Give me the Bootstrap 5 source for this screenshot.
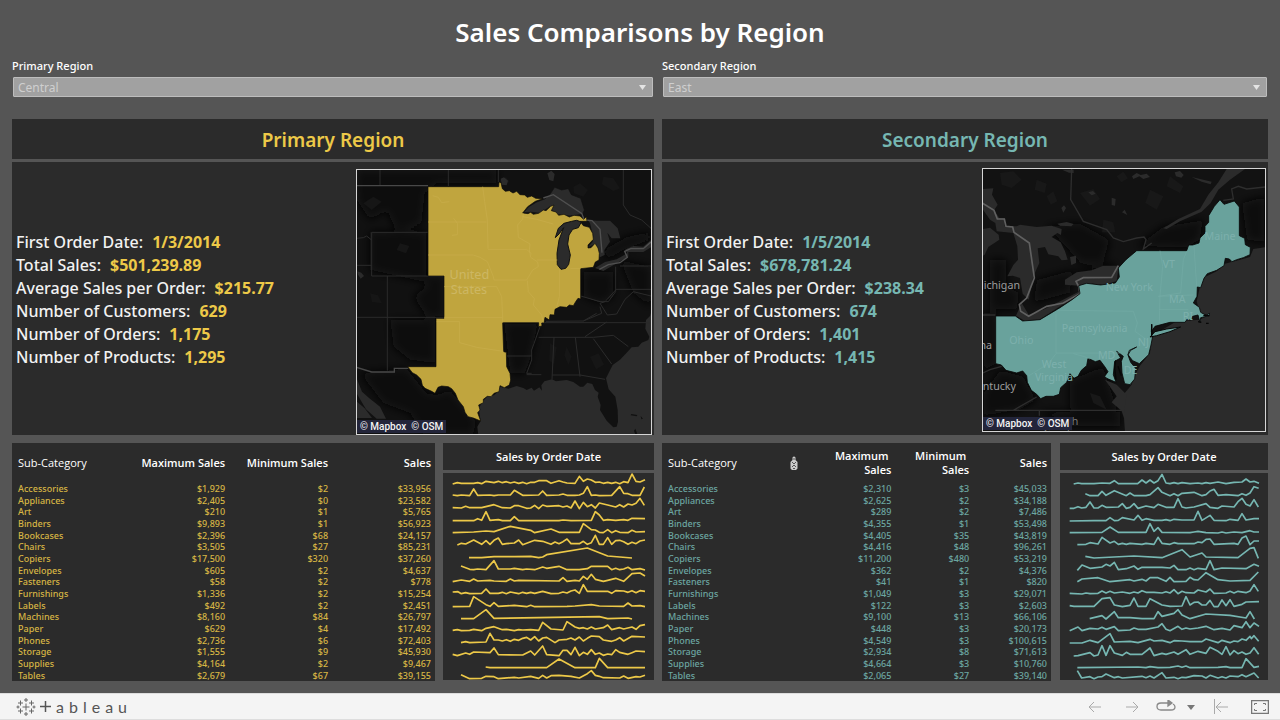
<!DOCTYPE html>
<html lang="en">
<head>
<meta charset="utf-8">
<meta name="viewport" content="width=device-width, initial-scale=1">
<title>Sales Comparisons by Region</title>
<link href="https://cdn.jsdelivr.net/npm/bootstrap@5.3.0/dist/css/bootstrap.min.css" rel="stylesheet">
<style>
:root{--panel:#2b2b2b;--yellow:#edc948;--teal:#76b7b2}
body{background:#555;color:#fff;font-family:"Noto Sans","Open Sans",sans-serif;font-size:12px;line-height:16px}
.dash{padding:12px;flex:1}
.dash h1{font-size:26px;line-height:40px;font-weight:600;margin:0 0 6px;text-align:center}
.regions{display:grid;grid-template-columns:642fr 606fr;column-gap:8px}
.primary{--tone:var(--yellow);--dim:#d6b544}
.secondary{--tone:var(--teal);--dim:#6ba6a1}
.panel{background:var(--panel)}
.filter label{font-size:11px;font-weight:500;margin-bottom:3px;display:block}
.filter .form-select{background-color:#a1a1a1;border:1px solid #bdbdbd;border-radius:1px;color:#cfcfcf;font-size:12px;line-height:16px;height:20px;padding:1px 20px 0 4px;margin:0 1px 22px;width:calc(100% - 2px);background-size:7px 5px;background-position:right 6px center;background-image:url("data:image/svg+xml,%3Csvg xmlns='http://www.w3.org/2000/svg' viewBox='0 0 7 5'%3E%3Cpath d='M0 0h7L3.500 5z' fill='%23e4e4e4'/%3E%3C/svg%3E")}
.region-name{font-size:19px;line-height:42px;height:40px;margin:0 0 3px;font-weight:600;text-align:center;color:var(--tone)}
.overview{min-height:273px;margin-bottom:8px;padding:6px 2px 0 4px}
.facts{font-size:16px;line-height:23px;margin:0 0 4px;font-weight:500;color:#f2f2f2}
.facts dt{font-weight:500}.facts dd{margin:0 0 0 9px;font-weight:700;color:var(--tone)}
.mapbox{position:relative;align-self:flex-start;border:1px solid #d6d6d6}
.primary .mapbox{flex:0 0 296px;margin-top:1px}
.secondary .mapbox{flex:0 0 284px}
.mapbox svg{display:block;width:100%}
.credit{position:absolute;left:0;bottom:1px;background:#23253a;padding:0 3px;font:500 10px/13px Roboto,sans-serif;gap:5px}
.credit a{color:#f4f4f4;text-decoration:none}
.details{display:grid;align-items:start}
.primary .details{grid-template-columns:423fr 211fr;column-gap:8px}
.secondary .details{grid-template-columns:389fr 208fr;column-gap:9px}
.figures{width:100%;table-layout:fixed;margin:0;font-size:9px;line-height:11px;color:var(--dim)}
.figures th,.figures td{padding:0 4px 0 0;text-align:right;font-weight:500;vertical-align:middle}
.figures th:first-child{text-align:left;padding-left:6px;overflow:hidden}
.figures thead th{height:39px;font:600 11px/14px "Open Sans","Noto Sans",sans-serif;color:#fff}
.figures thead th:first-child{font-weight:400}
.figures tbody tr{height:12px}
.figures tbody tr:nth-child(3n){height:11px}
.primary .figures col:first-child{width:27%}
.secondary .figures col:first-child{width:40%}
.trend-title{font:600 11px/28px "Open Sans","Noto Sans",sans-serif;height:27px;margin:0 0 3px;text-align:center}
.trend svg{display:block;width:100%}
.trend polyline{fill:none;stroke:var(--tone);stroke-width:5;stroke-linejoin:round}
.pointer{margin-right:16px;width:8px;height:14px}
.toolbar{background:#f4f4f4;border-top:1px solid #ddd;border-bottom:1px solid #ddd;height:27px;padding:0 11px 0 16px}
.toolbar button{border:0;background:none;padding:0;display:flex}
.step-s{margin-right:6px}.step-m{margin-right:14px}.step-l{margin-right:22px}
.wordmark{font:16px/20px Lato,sans-serif;color:#555;gap:5px}
</style>
</head>
<body class="d-flex flex-column min-vh-100">
<main class="dash">
<h1>Sales Comparisons by Region</h1>
<div class="regions">

<section class="primary">
<div class="filter"><label for="r1">Primary Region</label><select id="r1" class="form-select"><option>Central</option><option>East</option><option>South</option><option>West</option></select></div>
<h2 class="panel region-name">Primary Region</h2>
<div class="panel overview d-flex justify-content-between">
<dl class="facts align-self-center">
<div class="d-flex"><dt>First Order Date:</dt><dd>1/3/2014</dd></div>
<div class="d-flex"><dt>Total Sales:</dt><dd>$501,239.89</dd></div>
<div class="d-flex"><dt>Average Sales per Order:</dt><dd>$215.77</dd></div>
<div class="d-flex"><dt>Number of Customers:</dt><dd>629</dd></div>
<div class="d-flex"><dt>Number of Orders:</dt><dd>1,175</dd></div>
<div class="d-flex"><dt>Number of Products:</dt><dd>1,295</dd></div>
</dl>
<div class="mapbox">
<svg viewBox="21 30 882 792" role="img" aria-label="Map of the Central region">
<defs><filter id="soft" x="-20%" y="-20%" width="140%" height="140%"><feGaussianBlur stdDeviation="12"/></filter></defs>
<rect x="20" y="28" width="888" height="800" fill="#111"/>
<g fill="#080808" filter="url(#soft)"><path d="M20 30H440V70H260L225 100 215 190 140 215 110 150 60 180 20 120z"/><path d="M60 215H230V345H282V470H230L190 410 240 370 150 350 60 330z"/><path d="M120 480H255V610L180 600 130 560z M30 640L170 625 230 700 260 705 300 690 380 785 370 822H220L180 760 100 730z"/><path d="M462 490H565L540 600 525 640 480 640z M700 335H790V410L750 430 700 410z M760 270L830 230 900 215 900 240 820 270 770 300z M810 300L903 320V440L850 400z"/></g>
<g fill="#161616"><path d="M450 60l18-8 10 12-10 12-16-2z M40 130l30-20 25 15-30 25z M150 250l28 8-10 22-28-10z M60 400l24 6 12 24-30-4z M670 80l20-10 24 20-14 20-28-10z M760 50l30 5 20 30-20 8-34-20z M600 550l20 12-8 50-14-10z M650 560l15 30-10 25-12-30z M720 590l26-10 16 34-24 14z"/></g>
<path fill="#2b2b2b" d="M592 40l12-8 10 10-4 22-12-4z M452 56l10-4 12 10-4 14-14-2z M22 334l12 4 8 10-10 8-8-12z"/>
<path fill="#2b2b2b" d="M385 826L382 800 392 783 386 745 400 722 412 709 432 706 447 692 450 680 475 686 500 678 520 684 530 690 545 683 552 692 568 682 576 692 574 676 583 664 606 658 618 664 650 660 670 666 690 680 700 680 712 668 727 672 735 690 746 698 743 710 752 735 750 750 770 782 790 802 800 800 804 785 803 750 796 710 776 688 768 655 788 615 810 599 830 578 845 562 865 560 875 548 895 540 898 530 886 506 888 480 900 468 906 450V828z"/>
<path fill="#2b2b2b" d="M20 655L36 695 58 715 90 740 108 776H80L48 748 20 700z M20 724L44 745 66 774H20z"/>
<path fill="#111" d="M844 762l18 3-2 4-18-3z M872 768l7 8-5 2z M852 812l4-6 6 16-6 2z"/>
<g fill="none" stroke="#2b2b2b" stroke-width="3"><path d="M90 30V76M295 30V78M445 30V66M820 30V135L840 165 875 180 903 205"/><path d="M65 217H234M65 217V348H282M20 235L40 233 50 228 65 240M20 316H65M112 348V632M20 472H282"/><path d="M470 588H545M458 488H903M588 484L700 483 740 460M545 640L530 640 545 600 545 570 570 500M530 644H574M612 532L606 658M676 532L690 650M606 645H690L765 658M566 532H730L790 526 835 560M730 536L785 612M705 530L770 486M797 320V395L775 425 750 425 692 408M797 388H903M797 390L765 425 750 430 772 465 800 462 825 418 850 395 903 408M750 440L755 460 700 483M810 318H903"/></g>
<g fill="none" stroke="#484848" stroke-width="4"><path d="M20 77H234M20 622L65 636H133V625H175"/></g>
<path fill="#2b2b2b" stroke="#111" stroke-width="2" d="M520 158L536 140 560 126 584 117 600 103 614 82 635 90 655 86 664 104 692 115 703 150 698 163 660 168 625 164 604 152 600 140 570 160 545 157z"/>
<path fill="#2b2b2b" d="M720 190L714 180 740 182 780 182 803 205 811 235 785 235 772 218 780 245 763 270 764 285 749 292 746 276 735 251 714 262 728 245V222z"/>
<path fill="#2b2b2b" d="M735 324L765 306 800 298 832 280 826 268 850 258 880 260 903 240V262L880 276 835 276 835 290 800 310 760 333z"/>
<path fill="none" stroke="#505050" stroke-width="4" d="M580 114L610 104 695 160 703 180 726 182 750 208 756 278M748 328L775 314 810 308 832 292 824 274 842 266H880L903 246"/>
<path fill="#c0a53e" stroke="#090909" stroke-width="2" d="M234 80H446L447 66 453 68 457 86 466 94 478 92 489 99 500 94 510 104 524 105 532 112 545 108 557 115 578 116 556 124 533 140 518 159 534 161 542 157 550 163 566 160 580 150 588 152 602 139 612 135 604 152 618 156 626 166 642 163 658 171 672 166 690 168 701 178 709 170 711 184 690 184 700 197 718 202 728 220 730 238 714 255V264L723 263 735 250 744 264 748 280 747 300 736 306 730 322 692 326V417L684 415 677 425 670 437 658 435 650 442 630 440 615 448 613 465 600 464 598 480 585 472 582 488 575 489 576 498 566 500V488H458L461 575 469 577 470 620 480 640 482 660 478 675 463 683 450 677 447 695 432 700 423 710 412 709 400 718 400 728 386 735 390 750 383 758 392 783 370 774 354 770 345 757 340 740 324 720 316 700 305 686 295 680 275 678 264 682 255 700 245 694 225 685 217 676 213 658 200 645 187 638 173 620H258V475H282V348H234z"/>
<path fill="#2b2b2b" stroke="#111" stroke-width="3" d="M616 233L625 205 642 190 665 184 680 181 694 186 685 203 668 208 657 225 653 252 661 285 656 313 647 325 633 328 622 314 621 280 627 240 641 203 628 221z"/>
<g fill="none" stroke="#c8ad4c" stroke-width="2"><path d="M234 186H410M398 80L404 125 412 180 414 266M414 268H530L545 282M234 285H370L390 292 412 305 430 350 432 360H530L548 330 565 320 563 306 542 292 538 270 540 252 505 232 503 195 518 177 520 160M518 170L560 178 610 192M282 380H440L455 410 458 472M282 472H458V488M532 362L535 395 553 416 550 435 575 465 580 488M628 328V410L620 442M560 300H622M260 485H329V548L380 562 420 568 460 574M248 107L265 112 275 128 298 125M311 175L322 190V224L306 226M661 326H692"/></g>
<g fill="#cdb763" font-family="Noto Sans,sans-serif" font-size="38" text-anchor="middle"><text x="358" y="358">United</text><text x="357" y="402">States</text></g>
</svg>
<div class="credit d-flex"><a href="#">© Mapbox</a><a href="#">© OSM</a></div>
</div>
</div>
<div class="details">
<table class="panel figures"><colgroup><col><col><col><col></colgroup>
<thead><tr><th scope="col">Sub-Category</th><th scope="col">Maximum Sales</th><th scope="col">Minimum Sales</th><th scope="col">Sales</th></tr></thead>
<tbody>
<tr><th scope="row">Accessories</th><td>$1,929</td><td>$2</td><td>$33,956</td></tr>
<tr><th scope="row">Appliances</th><td>$2,405</td><td>$0</td><td>$23,582</td></tr>
<tr><th scope="row">Art</th><td>$210</td><td>$1</td><td>$5,765</td></tr>
<tr><th scope="row">Binders</th><td>$9,893</td><td>$1</td><td>$56,923</td></tr>
<tr><th scope="row">Bookcases</th><td>$2,396</td><td>$68</td><td>$24,157</td></tr>
<tr><th scope="row">Chairs</th><td>$3,505</td><td>$27</td><td>$85,231</td></tr>
<tr><th scope="row">Copiers</th><td>$17,500</td><td>$320</td><td>$37,260</td></tr>
<tr><th scope="row">Envelopes</th><td>$605</td><td>$2</td><td>$4,637</td></tr>
<tr><th scope="row">Fasteners</th><td>$58</td><td>$2</td><td>$778</td></tr>
<tr><th scope="row">Furnishings</th><td>$1,336</td><td>$2</td><td>$15,254</td></tr>
<tr><th scope="row">Labels</th><td>$492</td><td>$2</td><td>$2,451</td></tr>
<tr><th scope="row">Machines</th><td>$8,160</td><td>$84</td><td>$26,797</td></tr>
<tr><th scope="row">Paper</th><td>$629</td><td>$4</td><td>$17,492</td></tr>
<tr><th scope="row">Phones</th><td>$2,736</td><td>$6</td><td>$72,403</td></tr>
<tr><th scope="row">Storage</th><td>$1,555</td><td>$9</td><td>$45,930</td></tr>
<tr><th scope="row">Supplies</th><td>$4,164</td><td>$2</td><td>$9,467</td></tr>
<tr><th scope="row">Tables</th><td>$2,679</td><td>$67</td><td>$39,155</td></tr>
</tbody></table>
<div class="trend">
<h3 class="panel trend-title">Sales by Order Date</h3>
<div class="panel"><svg viewBox="21 111 633 621" role="img" aria-label="Monthly sales by sub-category, Central">
<polyline points="50,144 64,140 76,142 113,142 125,140 137,143 150,136 174,140 187,136 199,140 211,137 223,141 235,138 248,142 260,139 272,143 284,139 296,139 308,134 332,134 345,142 369,134 381,138 393,141 417,142 430,121 442,136 454,129 466,132 478,139 490,138 502,142 515,139 527,142 539,139 551,143 563,137 576,140 588,114 600,136 612,138 627,131"/>
<polyline points="50,177 64,179 76,177 101,179 113,159 125,178 162,177 174,179 187,177 223,177 235,163 260,178 308,177 320,165 332,178 369,177 381,174 393,178 417,178 430,177 442,172 454,152 466,178 478,177 490,179 527,178 551,152 563,172 576,173 588,178 612,178 625,153"/>
<polyline points="50,215 76,216 89,211 101,215 137,215 162,209 174,206 199,215 223,216 235,209 248,209 272,217 284,216 296,208 308,218 320,207 332,211 369,209 381,213 393,210 405,216 417,195 430,218 442,199 454,212 466,206 478,216 490,201 515,207 539,213 551,206 563,213 576,204 588,207 600,202 612,187 625,208"/>
<polyline points="50,254 113,254 125,248 137,253 150,227 162,253 187,251 199,254 223,254 235,242 248,254 369,254 381,252 405,254 466,253 478,227 490,237 502,253 515,251 539,253 563,251 576,253 588,247 627,248"/>
<polyline points="50,290 113,288 150,285 174,287 223,271 284,283 296,290 345,279 369,289 430,289 442,263 466,281 478,282 490,289 502,290 515,281 527,290 539,284 551,289 576,290 588,283 600,288 627,287"/>
<polyline points="64,327 76,322 89,324 113,312 137,325 150,314 162,325 174,313 187,306 199,325 211,323 235,321 248,312 260,326 296,313 320,316 345,325 357,318 369,323 381,317 393,309 405,323 430,323 442,316 454,325 466,320 478,298 490,325 502,325 515,305 527,325 539,314 551,313 563,317 576,325 588,319 600,323 612,315 627,312"/>
<polyline points="99,365 137,365 174,362 235,362 284,361 308,365 320,363 332,356 454,336 515,360 588,366"/>
<polyline points="75,390 101,400 113,401 125,399 150,401 174,374 187,399 223,399 235,397 260,401 272,399 296,401 320,393 332,397 369,391 393,401 430,401 454,398 466,391 515,391 527,401 539,397 551,401 563,399 576,394 588,401 612,398 627,402"/>
<polyline points="50,437 76,432 101,436 113,429 125,435 162,433 174,435 211,436 223,429 235,435 248,433 369,435 381,425 393,436 417,433 430,435 442,421 454,430 466,415 478,430 502,436 515,433 539,427 563,436 588,413 612,411 627,420"/>
<polyline points="50,468 66,467 76,473 89,470 101,473 137,472 150,459 162,472 187,472 199,469 211,473 223,468 248,473 260,469 272,472 284,469 296,472 320,466 345,473 369,472 381,468 393,471 405,465 417,462 430,472 442,446 454,466 515,466 527,472 539,464 563,465 576,469 588,464 600,470 612,464 627,466"/>
<polyline points="50,512 101,511 113,482 150,506 162,511 174,500 187,511 235,508 272,512 284,508 296,512 393,511 417,510 466,506 490,510 563,511 576,501 588,510 612,509 627,512"/>
<polyline points="75,548 113,548 150,521 174,547 490,542 515,548 576,546 588,549"/>
<polyline points="50,583 64,581 76,584 101,583 113,580 137,584 150,577 174,572 199,581 211,580 235,584 248,581 260,582 284,581 308,583 320,559 345,579 381,582 393,557 417,573 430,577 442,575 454,579 466,573 478,579 502,575 515,567 527,581 539,578 551,575 563,579 588,573 600,580 612,569 627,566"/>
<polyline points="75,620 89,617 101,620 150,618 162,592 174,612 187,612 199,615 211,611 223,616 235,610 248,613 260,607 272,604 284,612 296,602 308,615 320,606 332,604 357,620 369,612 393,610 405,606 417,612 430,603 442,615 454,607 466,600 490,602 502,612 527,616 539,612 551,605 563,615 588,601 627,603"/>
<polyline points="50,655 64,659 89,651 101,655 113,648 162,650 174,636 187,656 260,657 284,645 296,657 320,630 332,656 369,659 381,643 393,643 405,656 417,634 430,659 442,649 454,655 466,641 478,655 490,651 502,658 515,654 527,656 539,641 551,649 576,655 588,650 600,645 627,647"/>
<polyline points="149,693 162,695 332,695 369,669 417,695 478,695 490,667 515,695 627,695"/>
<polyline points="75,716 101,728 137,727 150,721 174,722 187,728 235,724 248,726 284,721 308,727 320,718 332,726 345,719 369,718 405,721 430,726 454,713 466,704 478,718 490,721 502,725 551,726 563,720 576,727 600,722 612,723 627,718"/>
</svg></div></div>
</div>
</section>

<section class="secondary">
<div class="filter"><label for="r2">Secondary Region</label><select id="r2" class="form-select"><option>East</option><option>Central</option><option>South</option><option>West</option></select></div>
<h2 class="panel region-name">Secondary Region</h2>
<div class="panel overview d-flex justify-content-between">
<dl class="facts align-self-center">
<div class="d-flex"><dt>First Order Date:</dt><dd>1/5/2014</dd></div>
<div class="d-flex"><dt>Total Sales:</dt><dd>$678,781.24</dd></div>
<div class="d-flex"><dt>Average Sales per Order:</dt><dd>$238.34</dd></div>
<div class="d-flex"><dt>Number of Customers:</dt><dd>674</dd></div>
<div class="d-flex"><dt>Number of Orders:</dt><dd>1,401</dd></div>
<div class="d-flex"><dt>Number of Products:</dt><dd>1,415</dd></div>
</dl>
<div class="mapbox">
<svg viewBox="39 28 846 785" role="img" aria-label="Map of the East region">
<rect x="37" y="25" width="852" height="792" fill="#121212"/>
<g fill="#070707" filter="url(#soft)"><path d="M500 260L580 200 640 190 700 180 690 240 650 265z M300 340L430 310 440 330 330 350z M200 360L310 330 300 400 190 430z M40 460H80V610L40 640z M90 630L160 650 200 720 150 750 40 770V700z M300 660L400 620 440 740 440 800H340L300 740z M815 130L885 110V250L830 240z"/><path d="M230 200L330 190 420 240 400 310 330 310z M60 300L110 300 110 380 150 400 140 450 60 450z M200 755H450V800H300z"/></g>
<g fill="#181818"><path d="M90 40l40-5 25 25-30 25-30-10z M200 60l30 12-6 28-30-10z M330 100l40-12 20 30-30 20z M400 180l30 8 6 30-40 0z M540 90l40 20-20 40-34-20z M600 50l40 30-10 20-40-20z M230 110l20-15 12 30-20 10z M440 50l20-14 14 20-20 12z M240 640l16 20-18 10z M360 700l30 10 20 40-40-20z"/></g>
<path fill="#2b2b2b" d="M889 262L850 268 840 292 810 300 765 312 740 335 705 352 690 380 680 425 690 460 715 465 690 480 620 485 560 520 543 540 540 580 510 618 490 655 485 675 460 705 450 740 462 775 465 817H889z"/>
<g fill="#2b2b2b"><path d="M39 88L70 86 66 105 83 135 72 152 88 175 104 176V200L140 200 150 195 200 202 245 198 275 208 273 226 262 220 245 232 272 248 285 275 293 300 275 302 265 290 235 284 225 262 203 266 208 310 190 350 176 420 158 402 150 355 128 348 112 350 130 316 144 300 142 260 130 220 80 215 76 190 60 180 39 150z"/><path d="M39 208L60 204 86 225 88 240 55 262 44 285 39 288z"/><path d="M285 360L320 338 365 332 400 318 446 318 440 364 400 376 350 370 328 378 285 375z"/><path d="M155 430L176 465 220 450 300 410 335 392 330 405 270 440 208 480 165 484 138 468z"/><path d="M262 192L290 187 311 193 304 200 270 198z M300 292L318 288 318 310 304 316z M486 50L500 40 512 46 530 42 540 52 520 58 508 50 490 58z M614 38L630 34 641 46 634 54 618 50z M355 98l14-4 8 8-12 5z M425 114l12 4-2 20-10-2z M456 158l8-8 8 16z M274 145l8-8 6 8-8 14z M276 30h35v10l-14-1z"/><path d="M580 206L625 178 690 148 715 105 745 68 770 28H825L780 60 745 90 722 130 695 156 630 185 590 208z M665 52L725 66 722 74 695 66z"/></g>
<g fill="none" stroke="#2e2e2e" stroke-width="4"><path d="M305 28L302 120 340 185 410 210 430 235 460 246 500 235 522 232 528 240 520 268 545 250M760 122L790 118 785 88 805 80 830 88 885 82"/><path d="M39 466H76M39 640L60 630 95 620M76 752H460M208 752V768M130 752L200 712"/></g>
<path fill="none" stroke="#606060" stroke-width="5" d="M37 130L72 152 82 178 103 178 108 200 128 202 132 218 178 250 193 355 170 415 148 435 152 455 176 470 230 440 280 430 330 402 326 380 318 365 340 354 425 353 445 318"/>
<g font-family="Noto Sans,sans-serif" font-size="32" fill="#9d9d9d" text-anchor="end"><text x="150" y="388">Michigan</text><text x="66" y="567">Indiana</text><text x="138" y="690">Kentucky</text><text x="325" y="795" fill="#777">th</text><text x="345" y="833" fill="#777">Carolina</text></g>
<path fill="#69a29c" stroke="#070707" stroke-width="2.500" d="M77 469H136L158 484 210 480 270 444 306 420 330 402 326 378 350 371 392 376 436 370 448 352 445 325 468 300 500 273H650L656 256 668 256 687 250 690 235 705 220V200L716 188V168L733 140 750 120 762 134 793 124 808 142V228L824 236 826 255 841 263 840 285 820 294 800 300 786 306 778 298 766 296 762 318 740 332 712 342 702 356 692 384 682 382 681 410 670 430 688 443 692 458 710 468 718 460V468L692 474 690 488 684 466 668 470 662 482 652 478 645 488 600 488 555 500 544 516 545 494 547 535 543 556 536 585 508 612 488 603 474 585 478 572 500 562 482 572 474 586 482 608 497 626 494 658 480 675 464 672 456 640 454 605 460 590 440 575 452 595 434 605 430 645 438 668 410 656 404 650 414 636 405 622 390 602 376 606 354 596 350 618 334 632 324 650 312 656 300 642 290 668 272 684 268 704 250 710 228 710 212 717 200 704 184 692 172 668 170 648 158 634 140 640 108 632 94 616 77 612z"/>
<path fill="#69a29c" stroke="#070707" stroke-width="3" d="M540 532L555 516 590 508 632 502 600 516 560 528z"/>
<g fill="none" stroke="#070707" stroke-width="4"><path d="M437 602L434 625 438 660M444 620L454 648M545 494V530M684 486l10 2M708 491h8M700 468h18"/></g>
<path fill="#2b2b2b" d="M405 660L440 675 470 705 462 760 425 728 440 710z"/>
<g fill="none" stroke="#73aaa5" stroke-width="2"><path d="M258 462V580H450M262 452L490 455 502 490 495 515 530 540M258 582L235 612 190 640 174 650M570 273L578 320 570 410 568 490M650 275L640 300 632 400 565 410 670 406M568 450H655M672 260L680 380M310 582L340 590 360 598"/></g>
<g font-family="Noto Sans,sans-serif" font-size="32" fill="#7db0ac" text-anchor="middle"><text x="750" y="242">Maine</text><text x="596" y="325">VT</text><text x="478" y="393">New York</text><text x="622" y="431">MA</text><text x="374" y="518">Pennsylvania</text><text x="154" y="553">Ohio</text><text x="410" y="599">MD</text><text x="520" y="559">NJ</text><text x="482" y="642">DE</text><text x="252" y="624">West</text><text x="252" y="663">Virginia</text><text x="654" y="481">RI</text></g>
</svg>
<div class="credit d-flex"><a href="#">© Mapbox</a><a href="#">© OSM</a></div>
</div>
</div>
<div class="details">
<table class="panel figures"><colgroup><col><col><col><col></colgroup>
<thead><tr><th scope="col"><div class="d-flex justify-content-between align-items-center">Sub-Category
<svg class="pointer" viewBox="0 0 8 14" aria-hidden="true"><path d="M2.500 1.500Q4-.5 5.500 1.500V4L7.500 6V12.500L6 14H2L.5 12.500V6L2.500 4z" fill="#ccc"/><path d="M3 3h2M2 6l2 2 2-2M2 11l2-2 2 2M3 12.500h2" fill="none" stroke="#555"/></svg></div></th><th scope="col">Maximum&nbsp;<br>Sales</th><th scope="col">Minimum&nbsp;<br>Sales</th><th scope="col">Sales</th></tr></thead>
<tbody>
<tr><th scope="row">Accessories</th><td>$2,310</td><td>$3</td><td>$45,033</td></tr>
<tr><th scope="row">Appliances</th><td>$2,625</td><td>$2</td><td>$34,188</td></tr>
<tr><th scope="row">Art</th><td>$289</td><td>$2</td><td>$7,486</td></tr>
<tr><th scope="row">Binders</th><td>$4,355</td><td>$1</td><td>$53,498</td></tr>
<tr><th scope="row">Bookcases</th><td>$4,405</td><td>$35</td><td>$43,819</td></tr>
<tr><th scope="row">Chairs</th><td>$4,416</td><td>$48</td><td>$96,261</td></tr>
<tr><th scope="row">Copiers</th><td>$11,200</td><td>$480</td><td>$53,219</td></tr>
<tr><th scope="row">Envelopes</th><td>$362</td><td>$2</td><td>$4,376</td></tr>
<tr><th scope="row">Fasteners</th><td>$41</td><td>$1</td><td>$820</td></tr>
<tr><th scope="row">Furnishings</th><td>$1,049</td><td>$3</td><td>$29,071</td></tr>
<tr><th scope="row">Labels</th><td>$122</td><td>$3</td><td>$2,603</td></tr>
<tr><th scope="row">Machines</th><td>$9,100</td><td>$13</td><td>$66,106</td></tr>
<tr><th scope="row">Paper</th><td>$448</td><td>$3</td><td>$20,173</td></tr>
<tr><th scope="row">Phones</th><td>$4,549</td><td>$3</td><td>$100,615</td></tr>
<tr><th scope="row">Storage</th><td>$2,934</td><td>$8</td><td>$71,613</td></tr>
<tr><th scope="row">Supplies</th><td>$4,664</td><td>$3</td><td>$10,760</td></tr>
<tr><th scope="row">Tables</th><td>$2,065</td><td>$27</td><td>$39,140</td></tr>
</tbody></table>
<div class="trend">
<h3 class="panel trend-title">Sales by Order Date</h3>
<div class="panel"><svg viewBox="30 111 624 621" role="img" aria-label="Monthly sales by sub-category, East">
<polyline points="71,144 84,141 95,143 132,143 156,141 180,142 193,134 205,143 263,143 276,132 288,141 300,132 312,141 324,134 336,115 348,141 360,143 372,140 384,143 396,140 420,143 444,141 456,143 468,140 480,142 504,138 528,143 552,139 576,138 588,129 600,138 612,136 627,142"/>
<polyline points="106,173 120,179 144,179 156,166 168,178 193,164 229,179 240,171 252,179 288,179 300,176 324,155 336,169 360,179 372,173 384,179 396,172 432,169 456,179 468,176 480,165 492,160 504,178 528,176 564,179 576,173 588,178 600,171 612,152 626,157"/>
<polyline points="59,217 72,217 84,212 95,216 108,214 120,198 132,216 144,216 156,208 168,214 205,213 217,203 229,217 240,214 252,203 264,217 288,210 312,215 324,205 348,214 372,214 384,188 396,213 408,216 432,213 468,203 480,214 504,217 516,210 552,213 564,197 576,187 588,205 600,210 612,191 625,213"/>
<polyline points="59,255 132,254 168,254 180,245 193,254 205,253 217,245 252,252 264,238 276,253 288,248 312,253 336,253 348,251 360,254 372,250 396,252 432,252 444,226 456,253 480,238 492,253 528,254 540,250 564,253 576,233 588,252 612,248 627,248"/>
<polyline points="59,290 156,289 180,273 205,289 288,289 300,263 312,286 324,275 336,289 420,290 432,288 444,286 468,290 504,291 516,288 528,291 552,288 576,290 600,284 612,288 627,288"/>
<polyline points="82,326 108,325 120,320 144,324 156,304 180,321 193,316 205,325 217,322 229,325 240,322 276,325 288,322 312,325 324,304 336,322 360,325 372,320 384,323 432,323 444,318 456,320 468,310 480,309 492,325 552,322 564,325 576,306 588,300 600,326 612,315 627,315"/>
<polyline points="106,361 132,366 252,360 336,365 396,341 420,363 456,351 468,363 564,365 600,337 612,335 625,367"/>
<polyline points="82,403 96,387 120,397 156,393 168,385 180,390 193,379 205,401 229,398 252,390 264,400 276,394 336,394 360,396 372,388 384,401 408,401 420,396 432,401 444,397 468,400 480,374 492,401 516,396 588,398 612,385 627,391"/>
<polyline points="82,437 96,429 144,425 180,437 240,431 252,435 276,430 288,435 300,425 324,425 348,436 360,424 372,437 408,436 420,424 432,431 444,432 468,410 504,431 540,435 600,433 625,408"/>
<polyline points="59,472 96,474 108,471 120,473 144,472 156,465 168,471 180,466 193,471 217,468 240,472 252,468 264,471 276,464 288,469 312,469 336,471 348,467 360,471 372,461 384,473 396,466 408,470 432,471 444,462 468,468 480,459 492,472 528,471 540,466 552,471 564,466 588,470 600,465 612,446 625,466"/>
<polyline points="59,509 72,511 132,511 156,488 180,485 193,507 217,512 240,508 252,486 264,511 288,511 300,488 336,507 360,511 396,510 408,482 420,507 432,499 444,498 456,507 468,507 480,493 492,512 504,512 516,492 528,509 540,491 552,511 576,505 588,498 627,497"/>
<polyline points="119,548 156,539 168,549 193,527 205,545 240,545 276,548 312,548 324,527 336,541 372,532 384,521 396,537 420,548 468,534 540,538 588,546 600,527 613,549"/>
<polyline points="59,584 84,573 96,584 120,577 144,579 156,574 168,580 193,572 205,584 240,582 252,576 264,580 288,580 324,573 336,563 348,580 360,584 384,571 396,580 408,576 420,579 444,576 468,571 492,581 516,577 540,582 552,569 576,575 588,557 600,575 612,561 627,571"/>
<polyline points="59,621 96,621 120,613 144,620 180,593 193,618 240,616 264,620 300,610 312,615 336,613 360,620 372,614 396,615 420,617 456,617 468,609 504,620 516,613 540,620 552,615 564,617 576,609 588,613 600,601 604,608 612,599 626,616"/>
<polyline points="71,660 84,659 120,650 132,660 144,657 156,629 168,658 180,629 193,651 217,658 229,649 240,655 276,655 300,636 312,659 336,652 348,655 372,648 384,655 408,641 420,655 444,646 468,652 480,634 504,646 516,655 528,632 540,657 552,644 564,653 576,648 588,655 600,651 612,635 626,655"/>
<polyline points="82,695 264,693 288,695 300,692 324,695 360,694 384,690 396,694 408,690 420,695 504,694 528,692 540,695 576,695 588,668 612,694 627,691"/>
<polyline points="82,704 95,726 120,722 132,728 144,723 156,722 168,714 193,725 205,722 217,726 276,721 288,725 300,720 312,726 336,710 348,726 372,724 384,728 396,724 408,725 432,719 456,720 468,726 480,718 504,726 516,722 528,726 540,720 564,722 576,716 588,722 612,711 626,726"/>
</svg></div></div>
</div>
</section>
</div>
</main>
<footer class="toolbar d-flex align-items-center justify-content-between">
<div class="d-flex align-items-center gap-1">
<svg width="20" height="18" viewBox="0 0 20 18" fill="none" stroke="#666" aria-hidden="true"><path d="M10 5.500v7M6.500 9h7M10 0v4M8 2h4M10 14v4M8 16h4M4.500 2.500v5M2 5h5M15.500 2.500v5M13 5h5M4.500 10.500v5M2 13h5M15.500 10.500v5M13 13h5M2 7.500v3M.5 9h3M18 7.500v3M16.500 9h3"/></svg>
<div class="wordmark d-flex align-items-center"><svg width="11" height="11" viewBox="0 0 11 11" stroke="#555" stroke-width="1.500" role="img" aria-label="t"><path d="M5.500 0v11M0 5.500h11"/></svg><span>a</span><span>b</span><span>l</span><span>e</span><span>a</span><span>u</span></div>
</div>
<div class="d-flex align-items-center">
<button class="step-l" aria-label="Undo"><svg width="16" height="14" viewBox="0 0 16 14" fill="none" stroke="#aaa"><path d="M14 7H2M7 2L2 7l5 5"/></svg></button>
<button class="step-m" aria-label="Redo"><svg width="16" height="14" viewBox="0 0 16 14" fill="none" stroke="#aaa"><path d="M1 7h12M8 2l5 5-5 5"/></svg></button>
<button class="step-s" aria-label="Revert"><svg width="22" height="14" viewBox="0 0 22 14" fill="none" stroke="#888" stroke-width="1.300"><path d="M8 10H6Q2 10 2 6.500T6 3h9M18 4q2 1 2 3 0 3-4 3H7"/><path d="M13 0l4 3-4 3z" fill="#888"/></svg></button>
<button class="step-m" aria-label="Revert options"><svg width="16" height="14" viewBox="0 0 16 14"><path d="M4 5h8l-4 5z" fill="#777"/></svg></button>
<button class="step-l" aria-label="Revert to start"><svg width="16" height="16" viewBox="0 0 16 16" fill="none" stroke="#aaa"><path d="M1.500 0v15M15 8H3M8 3L3 8l5 5"/></svg></button>
<button aria-label="Full screen"><svg width="18" height="14" viewBox="0 0 18 14" fill="none" stroke="#777"><path d="M.5.5h17v13H.5z" stroke-width="1.500"/><path d="M3.500 5V3.500H6M12 3.500h2.500V5M14.500 9v1.500H12M6 10.500H3.500V9"/></svg></button>
</div>
</footer>
<script src="https://cdn.jsdelivr.net/npm/bootstrap@5.3.0/dist/js/bootstrap.bundle.min.js"></script>
</body>
</html>
